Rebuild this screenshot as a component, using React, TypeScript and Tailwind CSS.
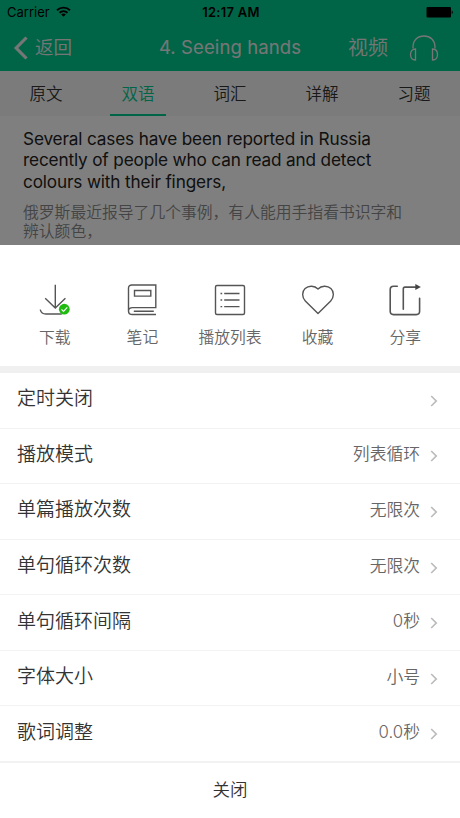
import React, { useState } from 'react';

const tabs = ['原文', '双语', '词汇', '详解', '习题'];

const settings = [
  { label: '定时关闭', value: '' },
  { label: '播放模式', value: '列表循环' },
  { label: '单篇播放次数', value: '无限次' },
  { label: '单句循环次数', value: '无限次' },
  { label: '单句循环间隔', value: '0秒' },
  { label: '字体大小', value: '小号' },
  { label: '歌词调整', value: '0.0秒' },
];

const iconProps = {
  width: 36,
  height: 36,
  viewBox: '0 0 36 36',
  fill: 'none',
  stroke: '#555555',
  strokeWidth: 1.4,
};

function DownloadIcon() {
  return (
    <svg {...iconProps}>
      <path d="M18.3 2.8v23M8.2 16.2l10.1 9.8 10.1-9.8M3.2 27.6c.8 2.8 2.7 4.4 5.6 4.4h16" />
      <circle cx="27.3" cy="27.2" r="5.4" fill="#1fbb10" stroke="none" />
      <path d="M24.5 27.4l2 2 3.8-4" stroke="#ffffff" strokeWidth="1.1" />
    </svg>
  );
}

function NoteIcon() {
  return (
    <svg {...iconProps}>
      <path d="M32 32.5H8.5c-2.4 0-4-1.4-4-3.6V6.2c0-2 1.3-3.2 3.3-3.2h24v22.6H8.7c-2.6 0-4.2 1.4-4.2 3.4" />
      <path d="M10.5 8.5h16.3v5.6H10.5zM9.8 29.2h20" />
    </svg>
  );
}

function PlaylistIcon() {
  return (
    <svg {...iconProps}>
      <rect x="3.5" y="3.5" width="29" height="29" rx="1.5" />
      <path d="M8.5 11.5h1.7M8.5 18h1.7M8.5 24.6h1.7M12.2 11.5h15.3M12.2 18h15.3M12.2 24.6h15.3" />
    </svg>
  );
}

function HeartIcon() {
  return (
    <svg {...iconProps} strokeLinejoin="round">
      <path d="M18 31.6L5.3 18.9C1.8 15.4 1.8 9.7 5.1 6.600 8.700 3.200 14.600 3.600 18 7c3.400-3.400 9.300-3.800 12.900-.4 3.300 3.100 3.300 8.800-.2 12.300z" />
    </svg>
  );
}

function ShareIcon() {
  return (
    <svg {...iconProps} strokeWidth="1.6" strokeLinecap="round">
      <path d="M10.300 4.200H6.500c-2.100 0-3.300 1.200-3.300 3.300v21.800c0 2.100 1.200 3.300 3.300 3.300h22.800c2.100 0 3.300-1.200 3.300-3.300V16.300" />
      <path d="M16.300 27.200V6.800c0-1.100.6-1.700 1.700-1.700h11" />
      <path d="M28.300 2.100l5.600 3-5.600 3z" fill="#444444" stroke="none" />
    </svg>
  );
}

const actions = [
  { label: '下载', icon: <DownloadIcon /> },
  { label: '笔记', icon: <NoteIcon /> },
  { label: '播放列表', icon: <PlaylistIcon /> },
  { label: '收藏', icon: <HeartIcon /> },
  { label: '分享', icon: <ShareIcon /> },
];

function StatusBar() {
  return (
    <div className="grid h-6 grid-cols-3 items-center px-[7px] text-[13px] text-black">
      <div className="flex items-center gap-[6px] pt-px">
        <span>Carrier</span>
        <svg className="-mt-[3px]" width="15" height="11" viewBox="0 0 15 11" fill="none" stroke="#000" strokeWidth="1.9">
          <path d="M1 4.200c3.700-3.500 9.300-3.500 13 0M3.500 6.800c2.300-2.200 5.700-2.200 8 0" />
          <path d="M7.500 10.800L5.200 8.400c1.300-1.200 3.300-1.200 4.600 0z" fill="#000" stroke="none" />
        </svg>
      </div>
      <span className="pt-px pl-[2px] text-center font-semibold tracking-[0.25px]">12:17 AM</span>
      <svg className="justify-self-end" width="27" height="11" viewBox="0 0 27 11">
        <rect x="0.500" width="24.500" height="10.500" rx="1" />
        <path d="M25.700 3.500c1.400.5 1.400 3.200 0 3.700z" />
      </svg>
    </div>
  );
}

export default function App() {
  const [activeTab, setActiveTab] = useState('双语');

  return (
    <div className="flex h-[818px] w-[460px] flex-col overflow-hidden bg-white font-['Inter','Noto_Sans_CJK_SC',sans-serif]">
      <div className="relative h-[245px] shrink-0 overflow-hidden bg-white">
        <header className="h-[71px] bg-[#00ca8e]">
          <StatusBar />
          <div className="grid h-[47px] grid-cols-[1fr_auto_1fr] items-center text-[#ededed]">
            <button className="flex items-center pl-[13px] text-[18.5px] font-[350]">
              <svg width="16" height="24" viewBox="0 0 16 24" fill="none" stroke="currentColor" strokeWidth="3.2">
                <path d="M13.5 1.5L3.2 12l10.3 10.5" />
              </svg>
              <span className="pl-[6px]">返回</span>
            </button>
            <h1 className="text-[18.5px] tracking-[0.1px]">4. Seeing hands</h1>
            <div className="flex items-center justify-end pr-[21px]">
              <span className="text-[20px] font-[350]">视频</span>
              <svg className="ml-[21px]" width="30" height="28" viewBox="0 0 30 28" fill="none" stroke="currentColor" strokeWidth="1.3">
                <path d="M4 14.5V13C4 6.5 8.500 2 15 2s11 4.500 11 11v1.500" />
                <path d="M6.500 15c-3 0-5 2.200-5 5.500s2 5.500 5 5.500zM23.500 15c3 0 5 2.200 5 5.500s-2 5.500-5 5.500z" />
              </svg>
            </div>
          </div>
        </header>
        <nav className="grid h-[45px] grid-cols-5 bg-[#f7f7f7]">
          {tabs.map((tab) => (
            <button
              key={tab}
              onClick={() => setActiveTab(tab)}
              className={`mx-auto w-[56px] border-b-2 pt-[4px] text-[16.5px] font-[350] ${
                activeTab === tab ? 'border-[#00ca8e] text-[#00ca8e]' : 'border-transparent text-[#333333]'
              }`}
            >
              {tab}
            </button>
          ))}
        </nav>
        <div className="px-[23px] pt-[12px]">
          <p className="w-[380px] text-[17.2px] leading-[21.4px] tracking-[-0.15px] text-[#222222]">
            Several cases have been reported in Russia
            <br />
            recently of people who can read and detect
            <br />
            colours with their fingers,
          </p>
          <p className="mt-[11px] w-[400px] text-[15.8px] leading-[19px] font-[350] text-[#888888]">
            俄罗斯最近报导了几个事例，有人能用手指看书识字和
            <br />
            辨认颜色，
          </p>
        </div>
        <div className="absolute inset-0 bg-black/50" />
      </div>

      <div className="grid h-[121px] shrink-0 grid-cols-5 px-[11px] pt-[37px]">
        {actions.map((action) => (
          <button key={action.label} className="flex flex-col items-center">
            {action.icon}
            <span className="mt-[8px] text-[15.8px] leading-6 font-[350] text-[#666666]">{action.label}</span>
          </button>
        ))}
      </div>

      <div className="h-[7px] shrink-0 bg-[#f0f0f0]" />

      <div className="flex h-[390px] shrink-0 flex-col">
        {settings.map((item) => (
          <button
            key={item.label}
            className="flex flex-1 items-center border-b border-[#f2f2f2] pr-[22px] pl-[17px] last:border-b-2"
          >
            <span className="pb-[2px] text-[19px] leading-6 font-[350] text-[#333333]">{item.label}</span>
            <span className="ml-auto pb-[3px] text-[16.8px] leading-6 font-[350] text-[#666666]">{item.value}</span>
            <svg className="mt-px ml-[10px]" width="8" height="12" viewBox="0 0 8 12" fill="none" stroke="#bbbbbb" strokeWidth="1.7">
              <path d="M1.2 1l5 5-5 5" />
            </svg>
          </button>
        ))}
      </div>

      <button className="flex-1 text-[17.5px] font-[350] text-[#333333]">关闭</button>
    </div>
  );
}
